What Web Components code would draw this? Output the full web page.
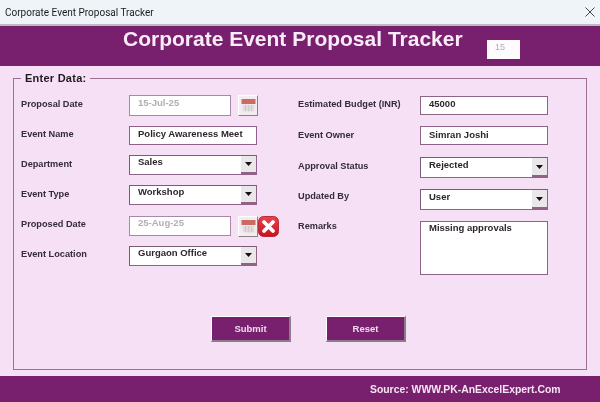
<!DOCTYPE html>
<html>
<head>
<meta charset="utf-8">
<title>Corporate Event Proposal Tracker</title>
<style>
    html, body { margin: 0; padding: 0; height: 402px; overflow: hidden; background: #f6e0f6; }
</style>
</head>
<body>
<tracker-app>
    <title-bar>Corporate Event Proposal Tracker</title-bar>
    <app-header count="15">Corporate Event Proposal Tracker</app-header>
    <data-frame legend="Enter Data:">
        <form-field slot="left" kind="date" disabled label="Proposal Date" style="--h:20.5px;--lt:3px;--vt:1px">15-Jul-25</form-field>
        <form-field slot="left" label="Event Name" style="--h:19px;--mt:9.5px;--lt:2px;--vt:1px">Policy Awareness Meet</form-field>
        <form-field slot="left" kind="select" label="Department" style="--mt:10px;--lt:3px">Sales</form-field>
        <form-field slot="left" kind="select" label="Event Type" style="--mt:10px;--lt:3px">Workshop</form-field>
        <form-field slot="left" kind="date" disabled label="Proposed Date" style="--mt:11px;--lt:2px">
            25-Aug-25
            <clear-icon slot="after"></clear-icon>
        </form-field>
        <form-field slot="left" kind="select" label="Event Location" style="--mt:9px;--lt:2px">Gurgaon Office</form-field>

        <form-field slot="right" label="Estimated Budget (INR)" style="--h:19px;--mt:1px;--lw:122px;--lt:2px;--vt:1px">45000</form-field>
        <form-field slot="right" label="Event Owner" style="--h:19px;--mt:11px;--lw:122px;--lt:3px;--vt:1.5px">Simran Joshi</form-field>
        <form-field slot="right" kind="select" label="Approval Status" style="--h:21px;--mt:12px;--lw:122px;--lt:3px;--vt:1px">Rejected</form-field>
        <form-field slot="right" kind="select" label="Updated By" style="--h:21px;--mt:11px;--lw:122px;--lt:1px;--vt:1px">User</form-field>
        <form-field slot="right" label="Remarks" style="--h:54px;--mt:11px;--lw:122px;--lt:-1px">Missing approvals</form-field>

        <action-button slot="actions">Submit</action-button>
        <action-button slot="actions">Reset</action-button>
    </data-frame>
    <app-footer>Source: WWW.PK-AnExcelExpert.Com</app-footer>
</tracker-app>

<script>
class TrackerApp extends HTMLElement {
    constructor() {
        super();
        this.attachShadow({ mode: 'open' });
    }

    connectedCallback() {
        this.shadowRoot.innerHTML = `
            <style>
                :host {
                    display: flex;
                    flex-direction: column;
                    width: 600px;
                    height: 402px;
                    background: #f6e0f6;
                    font-family: "Liberation Sans", Arial, sans-serif;
                    color: #2e262e;
                    filter: blur(0.3px);
                }
            </style>
            <slot></slot>
        `;
    }
}

class TitleBar extends HTMLElement {
    constructor() {
        super();
        this.attachShadow({ mode: 'open' });
    }

    connectedCallback() {
        this.shadowRoot.innerHTML = `
            <style>
                :host {
                    display: flex;
                    align-items: center;
                    justify-content: space-between;
                    height: 24px;
                    padding: 0 4px 0 5px;
                    background: #eff4f9;
                    border-bottom: 2px solid #bdbcbf;
                    font: 10px Roboto, sans-serif;
                    color: #1c1c1c;
                }
                svg { display: block; margin-right: 1px; }
            </style>
            <slot></slot>
            <svg width="10" height="10" viewBox="0 0 10 10">
                <path d="M0.5 0.5 L9.5 9.5 M9.5 0.5 L0.5 9.5" stroke="#333" stroke-width="0.9" fill="none"/>
            </svg>
        `;
    }
}

class AppHeader extends HTMLElement {
    constructor() {
        super();
        this.attachShadow({ mode: 'open' });
    }

    connectedCallback() {
        this.shadowRoot.innerHTML = `
            <style>
                :host {
                    display: flex;
                    align-items: flex-start;
                    height: 40px;
                    padding-left: 123px;
                    background: #78206e;
                    color: #f9ecf8;
                }
                .title {
                    width: 364px;
                    padding-top: 1px;
                    font-size: 21px;
                    font-weight: bold;
                    line-height: 24px;
                }
                .count {
                    box-sizing: border-box;
                    width: 33px;
                    height: 19px;
                    margin-top: 14px;
                    padding-left: 8px;
                    background: #fdfbfd;
                    color: #b5aeb5;
                    font-size: 9px;
                    line-height: 15px;
                }
            </style>
            <div class="title"><slot></slot></div>
            <div class="count">${this.getAttribute('count')}</div>
        `;
    }
}

class DataFrame extends HTMLElement {
    constructor() {
        super();
        this.attachShadow({ mode: 'open' });
    }

    connectedCallback() {
        this.shadowRoot.innerHTML = `
            <style>
                :host {
                    display: flex;
                    flex: 1;
                    min-height: 0;
                    margin: 5px 13px 6px 13px;
                }
                fieldset {
                    flex: 1;
                    min-width: 0;
                    margin: 0;
                    padding: 10px 0 0 7px;
                    border: 1px solid #9a7096;
                }
                legend {
                    padding: 0 4px;
                    font-size: 11px;
                    font-weight: bold;
                    line-height: 14px;
                    letter-spacing: 0.25px;
                    color: #1e1a1e;
                }
                .columns {
                    display: grid;
                    grid-template-columns: 277px 250px;
                }
                .column { display: flex; flex-direction: column; }
                .actions {
                    display: flex;
                    gap: 35px;
                    margin-top: 41px;
                    padding-left: 190px;
                }
            </style>
            <fieldset>
                <legend>${this.getAttribute('legend')}</legend>
                <div class="columns">
                    <div class="column"><slot name="left"></slot></div>
                    <div class="column"><slot name="right"></slot></div>
                </div>
                <div class="actions"><slot name="actions"></slot></div>
            </fieldset>
        `;
    }
}

class FormField extends HTMLElement {
    constructor() {
        super();
        this.attachShadow({ mode: 'open' });
    }

    connectedCallback() {
        const kind = this.getAttribute('kind') || 'text';
        const disabled = this.hasAttribute('disabled');

        let trailing = '';
        if (kind === 'select') {
            trailing = `
                <span class="arrow">
                    <svg width="7" height="4" viewBox="0 0 7 4"><path d="M0 0 H7 L3.5 4 Z" fill="#111"/></svg>
                </span>`;
        }

        let calendar = '';
        if (kind === 'date') {
            calendar = `
                <span class="calendar">
                    <svg width="15" height="15" viewBox="0 0 15 15">
                        <rect x="0.5" y="0.5" width="14" height="14" fill="#eee9ea"/>
                        <rect x="0.5" y="1" width="14" height="5" fill="#cf6a63"/>
                        <path d="M2 8 H13 M2 10 H13 M2 12 H13 M4.5 7 V13.5 M7.5 7 V13.5 M10.5 7 V13.5" stroke="#cbc5c8" stroke-width="0.8" fill="none"/>
                    </svg>
                </span>
                <slot name="after"></slot>`;
        }

        this.shadowRoot.innerHTML = `
            <style>
                :host {
                    display: flex;
                    align-items: flex-start;
                    margin-top: var(--mt, 0);
                    font-size: 9.5px;
                    font-weight: bold;
                }
                .label {
                    flex: none;
                    width: var(--lw, 108px);
                    margin-top: var(--lt, 3px);
                    font-size: 9.2px;
                    line-height: 12px;
                    color: #352c3a;
                }
                .box {
                    box-sizing: border-box;
                    display: flex;
                    justify-content: space-between;
                    width: 128px;
                    height: var(--h, 20px);
                    background: #fff;
                    border: 1px solid #8f6289;
                }
                .box.date { width: 102px; }
                .box.disabled { border-color: #a98aa6; color: #b3adb3; }
                .box.select { border-color: #7a5c76 #8f6289 #8f6289 #7a5c76; }
                .value {
                    padding: var(--vt, 0) 0 0 8px;
                    line-height: 12px;
                    white-space: nowrap;
                }
                .arrow {
                    flex: none;
                    display: flex;
                    align-items: center;
                    justify-content: center;
                    box-sizing: border-box;
                    width: 15px;
                    background: #ebe6ea;
                    border-bottom: 2px solid #8f6289;
                }
                .calendar {
                    flex: none;
                    box-sizing: border-box;
                    display: flex;
                    align-items: center;
                    justify-content: center;
                    width: 20px;
                    height: 21px;
                    margin-left: 7px;
                    background: #f3ecf1;
                    border-top: 1px solid #fff;
                    border-left: 1px solid #fff;
                    border-right: 1px solid #8a8088;
                    border-bottom: 1px solid #8a8088;
                }
            </style>
            <span class="label">${this.getAttribute('label')}</span>
            <div class="box ${kind} ${disabled ? 'disabled' : ''}">
                <span class="value"><slot></slot></span>
                ${trailing}
            </div>
            ${calendar}
        `;
    }
}

class ClearIcon extends HTMLElement {
    constructor() {
        super();
        this.attachShadow({ mode: 'open' });
    }

    connectedCallback() {
        this.shadowRoot.innerHTML = `
            <style>
                :host { display: block; width: 21px; height: 21px; }
                svg { display: block; }
            </style>
            <svg width="21" height="21" viewBox="0 0 21 21">
                <defs>
                    <linearGradient id="red" x1="0" y1="0" x2="0" y2="1">
                        <stop offset="0" stop-color="#ea444b"/>
                        <stop offset="1" stop-color="#cc1020"/>
                    </linearGradient>
                </defs>
                <rect x="0.5" y="0.5" width="20" height="20" rx="5" fill="url(#red)" stroke="#b0121f" stroke-width="0.8"/>
                <path d="M6 6 L15 15 M15 6 L6 15" stroke="#fff" stroke-width="3.8" stroke-linecap="round" fill="none"/>
            </svg>
        `;
    }
}

class ActionButton extends HTMLElement {
    constructor() {
        super();
        this.attachShadow({ mode: 'open' });
    }

    connectedCallback() {
        this.shadowRoot.innerHTML = `
            <style>
                :host {
                    box-sizing: border-box;
                    display: flex;
                    align-items: center;
                    justify-content: center;
                    width: 80px;
                    height: 26px;
                    background: #78206e;
                    border-top: 1px solid #fff;
                    border-left: 1px solid #fff;
                    border-right: 2px solid #8d7a8b;
                    border-bottom: 2px solid #8d7a8b;
                    color: #f0dcee;
                    font-size: 9.5px;
                    font-weight: bold;
                    cursor: pointer;
                }
            </style>
            <slot></slot>
        `;
    }
}

class AppFooter extends HTMLElement {
    constructor() {
        super();
        this.attachShadow({ mode: 'open' });
    }

    connectedCallback() {
        this.shadowRoot.innerHTML = `
            <style>
                :host {
                    display: flex;
                    align-items: center;
                    height: 26px;
                    padding-left: 370px;
                    background: #78206e;
                    color: #f5e6f4;
                    font-size: 10.4px;
                    font-weight: bold;
                }
            </style>
            <slot></slot>
        `;
    }
}

customElements.define('tracker-app', TrackerApp);
customElements.define('title-bar', TitleBar);
customElements.define('app-header', AppHeader);
customElements.define('data-frame', DataFrame);
customElements.define('form-field', FormField);
customElements.define('clear-icon', ClearIcon);
customElements.define('action-button', ActionButton);
customElements.define('app-footer', AppFooter);
</script>
</body>
</html>
